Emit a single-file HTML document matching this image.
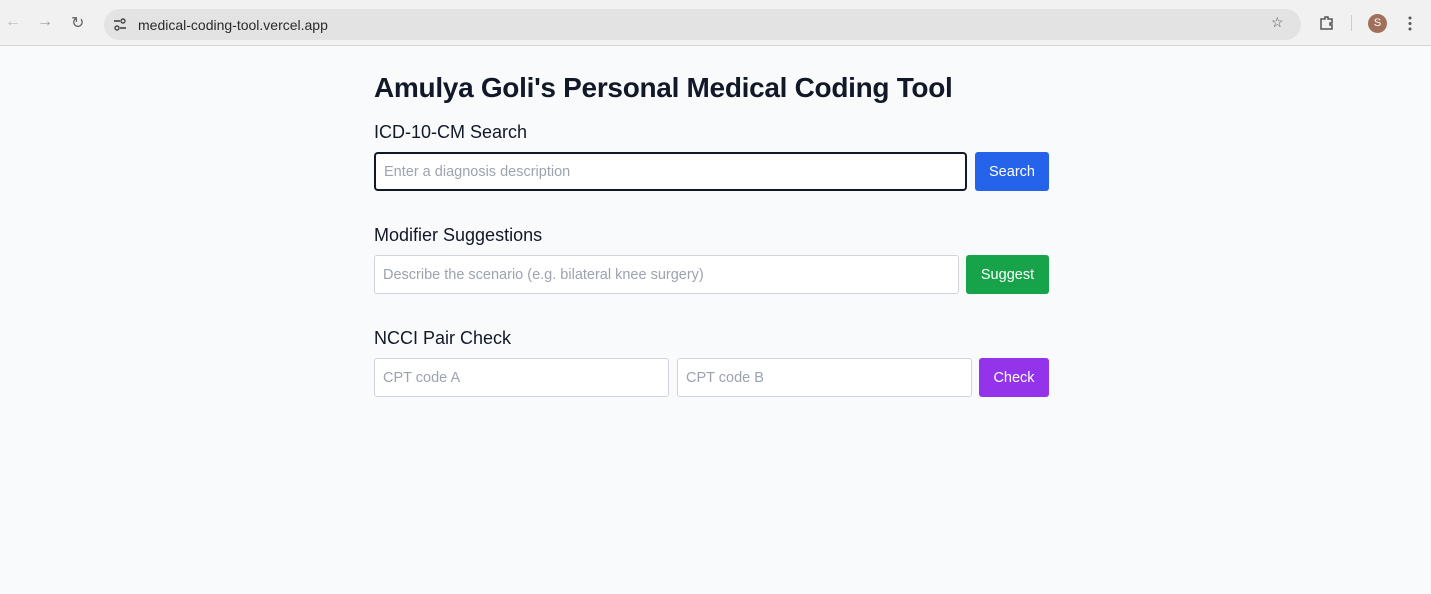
<!DOCTYPE html>
<html><head><style>
*{box-sizing:border-box;margin:0;padding:0}
body{width:1431px;height:594px;background:#f9fafb;font-family:"Liberation Sans",sans-serif;position:relative;overflow:hidden}
.bar{position:absolute;left:0;top:0;width:1431px;height:46px;background:#f1f1f1;border-bottom:1px solid #d6d6d6}
.url{position:absolute;left:104px;top:9px;width:1197px;height:31px;background:#e3e3e3;border-radius:16px}
.url span{position:absolute;left:34px;top:8px;font-size:14px;color:#2a2a2a}
.ic{position:absolute;color:#666;font-size:16px}
h1{position:absolute;left:374px;top:72px;font-size:28px;font-weight:bold;color:#111827;letter-spacing:-0.3px}
h2{position:absolute;left:374px;font-size:18px;font-weight:normal;color:#111827}
.in{position:absolute;height:39px;background:#fff;border:1px solid #d1d5db;border-radius:3px;font-size:14.5px;color:#9ca3af;padding:11px 8px}
.btn{position:absolute;height:39px;border-radius:3px;color:#fff;font-size:14.5px;text-align:center;line-height:41px}
</style></head><body>
<div class="bar">
<span class="ic" style="left:5px;top:13px;color:#bbb">←</span>
<span class="ic" style="left:37px;top:13px;color:#999">→</span>
<span class="ic" style="left:71px;top:13px">↻</span>
<div class="url">
<svg style="position:absolute;left:9px;top:9px" width="14" height="13"><line x1="1" y1="3" x2="7" y2="3" stroke="#444" stroke-width="1.6"/><circle cx="10" cy="3" r="2" fill="none" stroke="#444" stroke-width="1.4"/><line x1="7" y1="10" x2="13" y2="10" stroke="#444" stroke-width="1.6"/><circle cx="4" cy="10" r="2" fill="none" stroke="#444" stroke-width="1.4"/></svg>
<span>medical-coding-tool.vercel.app</span>
<span class="ic" style="left:1167px;top:5px;color:#555">☆</span>
</div>
<svg style="position:absolute;left:1319px;top:15px" width="16" height="16"><path d="M2 4h4v-2h3v2h4v4h-2v2h2v4h-11z" fill="none" stroke="#555" stroke-width="1.5"/></svg>
<div style="position:absolute;left:1351px;top:15px;width:1px;height:16px;background:#ccc"></div>
<div style="position:absolute;left:1368px;top:14px;width:19px;height:19px;border-radius:50%;background:#a0705c;color:#fff;font-size:11px;text-align:center;line-height:19px">S</div>
<svg style="position:absolute;left:1408px;top:16px" width="4" height="15"><circle cx="2" cy="2" r="1.5" fill="#555"/><circle cx="2" cy="7.5" r="1.5" fill="#555"/><circle cx="2" cy="13" r="1.5" fill="#555"/></svg>
</div>
<h1>Amulya Goli's Personal Medical Coding Tool</h1>
<h2 style="top:122px">ICD-10-CM Search</h2>
<div class="in" style="left:374px;top:152px;width:593px;border:2px solid #111827;border-radius:4px;padding:10px 8px">Enter a diagnosis description</div>
<div class="btn" style="left:975px;top:152px;width:74px;background:#2563eb">Search</div>
<h2 style="top:225px">Modifier Suggestions</h2>
<div class="in" style="left:374px;top:255px;width:585px">Describe the scenario (e.g. bilateral knee surgery)</div>
<div class="btn" style="left:966px;top:255px;width:83px;background:#16a34a">Suggest</div>
<h2 style="top:328px">NCCI Pair Check</h2>
<div class="in" style="left:374px;top:358px;width:295px">CPT code A</div>
<div class="in" style="left:677px;top:358px;width:295px">CPT code B</div>
<div class="btn" style="left:979px;top:358px;width:70px;background:#9333ea">Check</div>
</body></html>
